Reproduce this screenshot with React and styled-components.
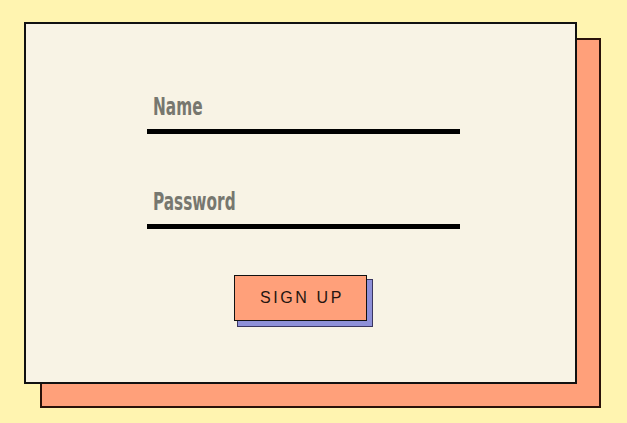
import React from 'react';
import styled, { createGlobalStyle } from 'styled-components';

const GlobalStyle = createGlobalStyle`
	html, body {
		margin: 0;
		background: #fff4b0;
	}
	* {
		box-sizing: border-box;
	}
`;

const Page = styled.div`
	width: 627px;
	height: 423px;
	padding: 22px 0 0 24px;
	background: #fff4b0;
	isolation: isolate;
`;

const Card = styled.div`
	position: relative;
	width: 553px;
	height: 362px;
	background: #f8f3e5;
	border: 2px solid #111;
	padding: 65px 0 0 121px;
	display: flex;
	flex-direction: column;

	&::before {
		content: '';
		position: absolute;
		top: 14px;
		left: 14px;
		width: 557px;
		height: 366px;
		background: #ffa07a;
		border: 2px solid #2a120a;
		z-index: -1;
	}
`;

const Form = styled.form`
	display: flex;
	flex-direction: column;
	gap: 50px;
	width: 313px;
`;

const Field = styled.label`
	display: flex;
	align-items: flex-end;
	width: 100%;
	height: 45px;
	padding: 0 6px 10px;
	border-bottom: 5px solid #000;
	cursor: text;
`;

const Caption = styled.span`
	display: inline-block;
	font-family: 'DejaVu Sans Condensed', 'DejaVu Sans', sans-serif;
	font-weight: bold;
	font-size: 24px;
	line-height: 1;
	color: #77776f;
	transform: scaleX(0.71);
	transform-origin: left center;
	white-space: nowrap;
`;

const ButtonRow = styled.div`
	display: flex;
	justify-content: center;
	width: 549px;
	margin: 46px 0 0 -121px;
	isolation: isolate;
`;

const Button = styled.button`
	position: relative;
	width: 133px;
	height: 46px;
	padding: 0 0 0 3px;
	background: #ffa07a;
	border: 1px solid #111;
	font-family: 'Liberation Sans', Arial, sans-serif;
	font-size: 16px;
	letter-spacing: 2.6px;
	color: #241510;
	cursor: pointer;

	&::after {
		content: '';
		position: absolute;
		top: 3px;
		left: 2px;
		width: 134px;
		height: 46px;
		background: #8e90d8;
		border: 1px solid #3a3560;
		z-index: -1;
	}
`;

export default () => {
	const fields = ['Name', 'Password'];
	return (
		<Page>
			<GlobalStyle />
			<Card>
				<Form onSubmit={e => e.preventDefault()}>
					{fields.map(f => (
						<Field key={f}>
							<Caption>{f}</Caption>
						</Field>
					))}
				</Form>
				<ButtonRow>
					<Button type="button">SIGN UP</Button>
				</ButtonRow>
			</Card>
		</Page>
	);
};
